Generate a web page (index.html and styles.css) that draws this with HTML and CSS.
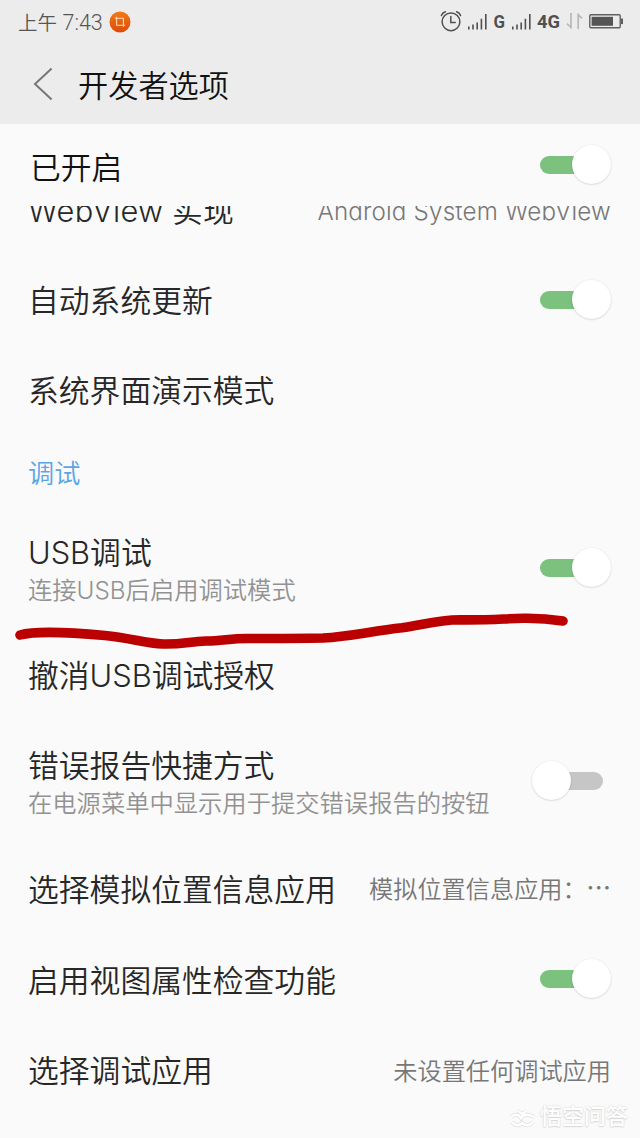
FILE: index.html
```html
<!DOCTYPE html>
<html lang="zh-CN">
<head>
<meta charset="utf-8">
<title>开发者选项</title>
<link rel="stylesheet" href="styles.css">
</head>
<body>
<div class="screen">
  <header class="top">
    <div class="status">
      <span class="clock">上午 <span class="time">7:43</span></span>
      <svg class="app-badge" width="22" height="22" viewBox="0 0 22 22"><defs><linearGradient id="og" x1="0" y1="0" x2="0" y2="1"><stop offset="0" stop-color="#f27a16"/><stop offset="1" stop-color="#dc4b08"/></linearGradient></defs><circle cx="11" cy="11" r="10.5" fill="url(#og)"/><path d="M5.8 7.2H14.4V15.8M7.6 5.8V14.2H16.2" fill="none" stroke="#ffd9b8" stroke-width="1.1"/></svg>
      <svg class="indicators" width="190" height="30" viewBox="0 0 190 30">
        <g fill="none" stroke="#505050" stroke-width="1.5" stroke-linecap="round"><circle cx="11" cy="14.8" r="8.9"/><path d="M10.8 9.6V15.4H15.2M1.4 8.6Q2.4 5.8 5.4 4.8M16.6 4.8Q19.6 5.8 20.6 8.6"/></g>
        <path d="M28.8 22.6V19.4M33 22.6V17.6M37.2 22.6V15.4M41.4 22.6V11.8M45.8 22.6V7M72.8 22.6V19.4M77 22.6V17.6M81.2 22.6V15.4M85.4 22.6V11.8M89.8 22.6V7" stroke="#505050" stroke-width="1.6"/>
        <text class="net" x="53.5" y="21.2" textLength="11.5" lengthAdjust="spacingAndGlyphs">G</text>
        <text class="net" x="97" y="21.2" textLength="23" lengthAdjust="spacingAndGlyphs">4G</text>
        <path d="M131 6V21.5M131.6 21L127 16.6M138.2 22V6.5M137.6 7L142 11.4" fill="none" stroke="#b8b8b8" stroke-width="1.7"/>
        <rect x="149.8" y="7.8" width="30.4" height="13" rx="1" fill="none" stroke="#606060" stroke-width="1.4"/><rect x="151.6" y="9.8" width="21.4" height="9" fill="#555"/><rect x="181" y="11.5" width="2" height="5.6" fill="#606060"/>
      </svg>
    </div>
    <div class="titlebar">
      <svg class="back" width="20" height="34" viewBox="0 0 20 34"><path d="M18.6 1.6L2 17L18.6 32.4" fill="none" stroke="#777" stroke-width="2"/></svg>
      <h1 class="title">开发者选项</h1>
    </div>
  </header>

  <section class="master"><span class="label strong">已开启</span><span class="toggle on"></span></section>

  <main class="list">
    <div class="row scrolled"><span class="label"><span class="webview">WebView</span> 实现</span><span class="value system">Android System WebView</span></div>
    <div class="row"><span class="label">自动系统更新</span><span class="toggle on raised"></span></div>
    <div class="row"><span class="label">系统界面演示模式</span></div>
    <h2 class="group">调试</h2>
    <div class="row tall">
      <div class="texts"><span class="label">USB调试</span><span class="summary">连接USB后启用调试模式</span></div>
      <span class="toggle on"></span>
      <svg class="stroke" width="560" height="50" viewBox="0 0 560 50"><path d="M10 25C26 20.500 62 22.500 95 25.500C120 28 135 33 153 34C172 34.500 180 31.500 196 31C212 31 220 28.500 236 28.500C265 28.500 285 28.500 313 28C340 26.500 362 21 392 17.800C414 14.500 428 10 450 9.800C480 10.300 495 8.500 513 8.300C530 8 540 9 553 11" fill="none" stroke="#ba0000" stroke-width="9.600" stroke-linecap="round"/></svg>
    </div>
    <div class="row"><span class="label">撤消USB调试授权</span></div>
    <div class="row tall">
      <div class="texts"><span class="label">错误报告快捷方式</span><span class="summary">在电源菜单中显示用于提交错误报告的按钮</span></div>
      <span class="toggle off"></span>
    </div>
    <div class="row"><span class="label mock-label">选择模拟位置信息应用</span><span class="value mock"><span>模拟位置信息应用：</span><span class="dots">···</span></span></div>
    <div class="row low"><span class="label">启用视图属性检查功能</span><span class="toggle on"></span></div>
    <div class="row low"><span class="label">选择调试应用</span><span class="value">未设置任何调试应用</span></div>
  </main>

  <div class="watermark">
    <svg width="27" height="23" viewBox="0 0 27 23"><g fill="none" stroke="#dedede" stroke-width="4"><path d="M2 12Q8 7 12 13Q15 7 25 12M3 17Q8 23 13 18Q19 23 24 17M9 6L13 9L17 6"/></g><g fill="none" stroke="#fff" stroke-width="2.5"><path d="M2 12Q8 7 12 13Q15 7 25 12M3 17Q8 23 13 18Q19 23 24 17M9 6L13 9L17 6"/></g></svg>
    <span>悟空问答</span>
  </div>
</div>
</body>
</html>
```
FILE: styles.css
```css
* { box-sizing: border-box; }
body { margin: 0; }
.screen {
  position: relative;
  width: 640px;
  height: 1138px;
  overflow: hidden;
  background: #fafafa;
  color: #272727;
  font-family: Inter, "Noto Sans CJK SC", sans-serif;
  font-weight: 350;
  display: flex;
  flex-direction: column;
}
.top { height: 124px; background: #ececec; flex: none; }
.status { height: 44px; display: flex; align-items: center; padding: 0 10px 0 18px; }
.clock { font-size: 19.5px; color: #555; white-space: nowrap; width: 91px; padding-bottom: 2px; }
.time { font-family: Roboto, sans-serif; font-size: 21.5px; }
.app-badge { margin-bottom: 1px; }
.indicators { margin-left: auto; }
.net { font: 700 18px Roboto, sans-serif; fill: #505050; }
.titlebar { height: 80px; display: flex; align-items: center; padding-left: 33px; gap: 25px; }
.title { margin: 0; font-size: 30.2px; font-weight: 350; color: #111; line-height: 40px; padding-top: 3px; }
.master {
  height: 82px;
  flex: none;
  display: flex;
  align-items: center;
  justify-content: space-between;
  padding: 0 29px 0 30px;
}
.master .label { padding-top: 5px; }
.list { flex: 1; overflow: hidden; }
.row {
  position: relative;
  height: 90px;
  display: flex;
  align-items: center;
  justify-content: space-between;
  padding: 0 29px 0 28px;
}
.scrolled { margin-top: -40px; }
.tall { height: 123px; }
.texts { display: flex; flex-direction: column; }
.label { font-size: 30.8px; line-height: 40px; white-space: nowrap; }
.webview { letter-spacing: 0.3px; }
.low .label { padding-top: 3px; }
.mock-label { padding-top: 1px; }
.strong { color: #111; }
.summary { font-size: 24.3px; line-height: 34px; color: #929292; white-space: nowrap; }
.value { font-size: 24.2px; color: #777; white-space: nowrap; }
.system { letter-spacing: 0.18px; }
.mock { display: flex; width: 242px; justify-content: space-between; padding-bottom: 3px; }
.dots { letter-spacing: 1px; padding-top: 3px; font-weight: 500; }
.group { margin: 0; height: 72px; line-height: 75px; padding-left: 28px; font-size: 26.2px; font-weight: 350; color: #5aa5e6; }
.toggle { position: relative; flex: none; width: 79px; height: 40px; padding: 11px 8px; }
.toggle::before { content: ""; display: block; height: 18px; border-radius: 9px; background: #7cc17e; }
.toggle.off::before { background: #c6c6c6; }
.toggle::after {
  content: "";
  position: absolute;
  top: 0;
  right: 0;
  width: 39px;
  height: 39px;
  border-radius: 50%;
  background: #fff;
  box-shadow: 0 0.5px 2px rgba(0, 0, 0, 0.2);
}
.toggle.off::after { right: auto; left: 0; }
.raised { margin-bottom: 3px; }
.tall .toggle { margin-bottom: 4px; }
.stroke { position: absolute; left: 10px; top: 102px; z-index: 1; }
.watermark {
  position: absolute;
  right: 12px;
  bottom: 5px;
  display: flex;
  align-items: center;
  gap: 4px;
  color: #fff;
  font-size: 22px;
  line-height: 34px;
  font-weight: 500;
  text-shadow: 0 0 2px #ccc, 0 1px 1px #ddd;
}
```
